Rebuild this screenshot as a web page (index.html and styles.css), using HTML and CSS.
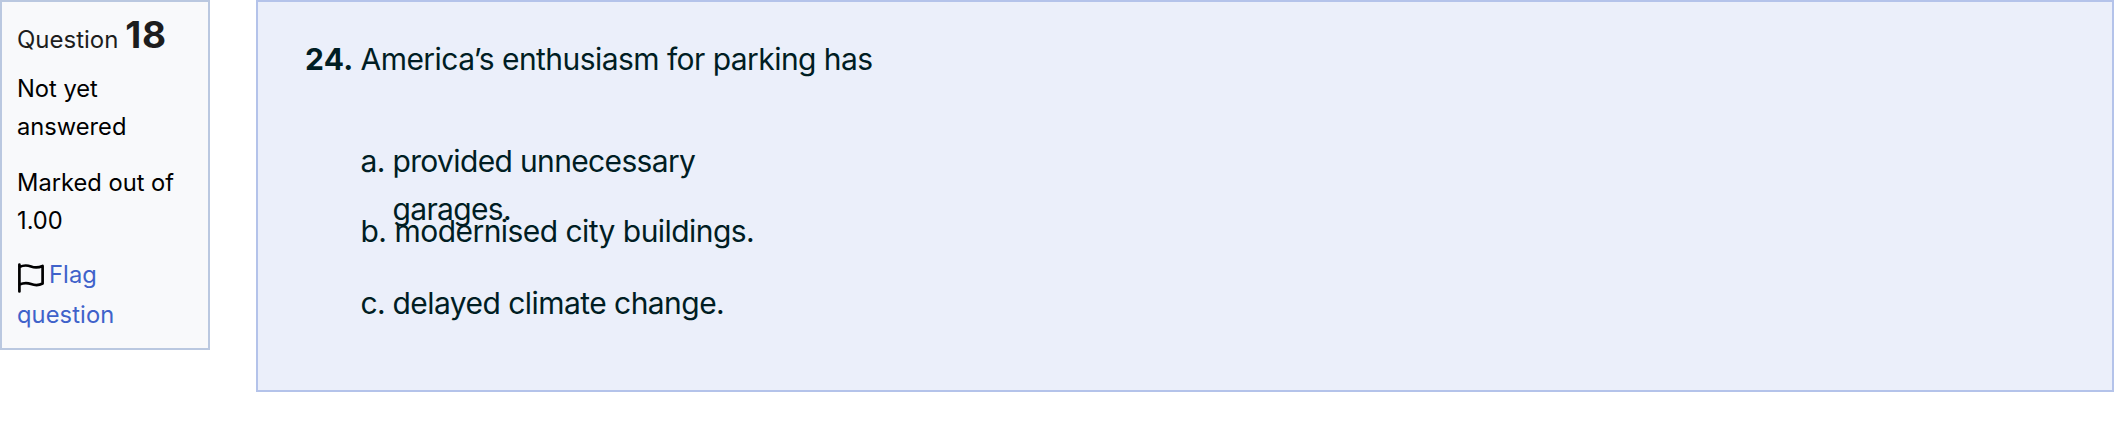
FILE: index.html
```html
<!DOCTYPE html>
<html lang="en">
<head>
    <meta charset="utf-8">
    <title>Question 18</title>
    <link rel="stylesheet" href="styles.css">
</head>
<body>
    <div class="que">
        <div class="info">
            <h3 class="no">Question <span class="qno">18</span></h3>
            <div class="state">Not yet answered</div>
            <div class="grade">Marked out of 1.00</div>
            <div class="flag">
                <svg class="flag-icon" viewBox="0 0 26 30" fill="none" stroke="#000" stroke-width="2.7" stroke-linecap="round" stroke-linejoin="round">
                    <path d="M1.4 1.5V28.5M1.4 4C6 1.8 9 2 13 3.500S20 5 24.600 3V20.500C20 23 17 22.500 13 21S6 19.500 1.400 21.500"/>
                </svg><a class="flag-link">Flag question</a>
            </div>
        </div>
        <div class="content">
            <p class="qtext"><b class="num">24.</b><span class="stem">America’s enthusiasm for parking has</span></p>
            <!-- rows have a fixed height, a long answer runs over the next one -->
            <div class="answer">
                <div class="row row-a"><span class="letter">a.</span><span class="label">provided unnecessary garages.</span></div>
                <div class="row row-b"><span class="letter">b.</span><span class="label">modernised city buildings.</span></div>
                <div class="row row-c"><span class="letter">c.</span><span class="label">delayed climate change.</span></div>
            </div>
        </div>
    </div>
</body>
</html>
```
FILE: styles.css
```css
* {
    box-sizing: border-box;
}
body {
    margin: 0;
    background: #fff;
    font-family: Inter, "Liberation Sans", sans-serif;
}
.que {
    display: flex;
    align-items: flex-start;
    gap: 46px;
}

/* left info box */
.info {
    width: 210px;
    height: 350px;
    padding: 11px 15px;
    border: 2px solid #bac8e0;
    background: #f8f9fb;
    color: #000;
    font-size: 23.7px;
    line-height: 38px;
}
.no {
    margin: 0 0 13px;
    height: 44px;
    font-size: 24px;
    font-weight: 400;
    line-height: 44px;
    color: #1d1d1d;
    white-space: nowrap;
}
.qno {
    font-size: 37px;
    font-weight: 700;
    letter-spacing: 0.8px;
}
.state {
    margin-bottom: 18px;
}
.grade {
    margin-bottom: 15px;
}
.flag {
    line-height: 40px;
}
.flag-icon {
    width: 26px;
    height: 30px;
    margin: 0 5px 0 1px;
    vertical-align: -10px;
}
.flag-link {
    color: #3f62ca;
    letter-spacing: 0.1px;
}

/* question box */
.content {
    flex: 1;
    height: 392px;
    padding: 33px 47px;
    border: 2px solid #b4c3ea;
    background: #ebeffa;
    color: #001d23;
    font-size: 30px;
    line-height: 48px;
    letter-spacing: -0.55px;
}
.qtext {
    display: flex;
    margin: 0 0 54px;
}
.num {
    width: 55.5px;
    letter-spacing: 0.3px;
}
.answer {
    padding-left: 55.5px;
}
.row {
    display: flex;
    height: 72px;
}
.row-a {
    height: 70px;
}
.letter {
    width: 32px;
}
.row-b .letter {
    width: 34px;
}
.row-a .label {
    width: 340px;
    letter-spacing: -0.65px;
}
```
